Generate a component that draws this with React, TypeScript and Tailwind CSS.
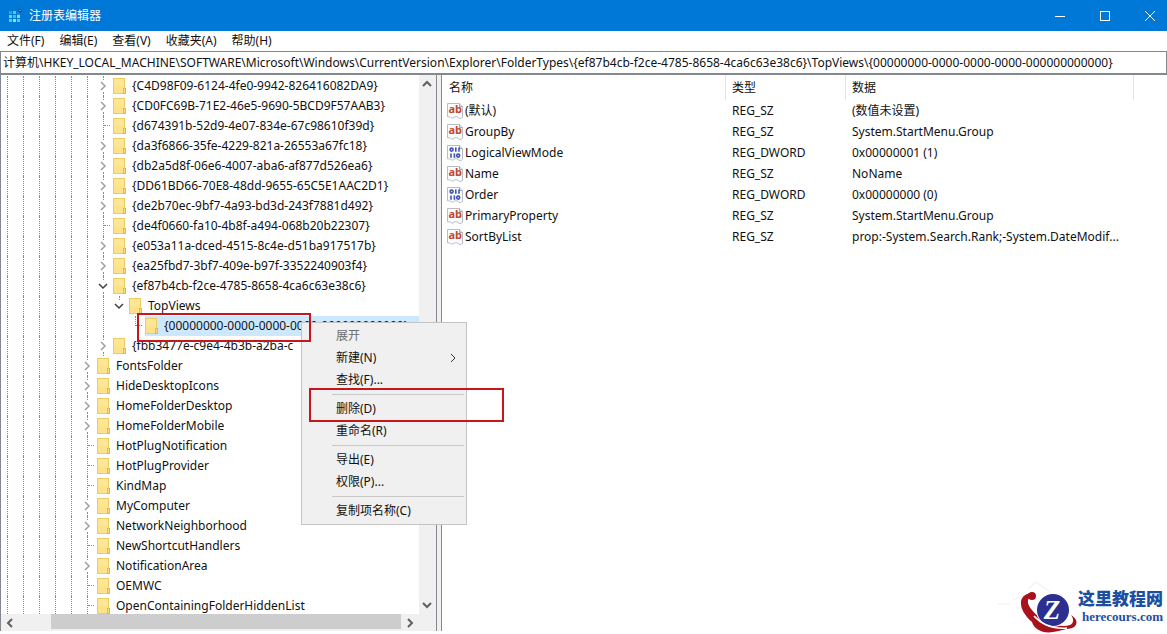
import type { ReactNode } from "react"

type TreeState = "closed" | "open" | "leaf"

type TreeNode = {
    name: string
    depth: number
    state: TreeState
    selected?: boolean
}

type RegValue = {
    name: string
    type: "REG_SZ" | "REG_DWORD"
    data: string
}

const ADDRESS =
    "计算机\\HKEY_LOCAL_MACHINE\\SOFTWARE\\Microsoft\\Windows\\CurrentVersion\\Explorer\\FolderTypes\\{ef87b4cb-f2ce-4785-8658-4ca6c63e38c6}\\TopViews\\{00000000-0000-0000-0000-000000000000}"

const MENUS = ["文件(F)", "编辑(E)", "查看(V)", "收藏夹(A)", "帮助(H)"]

const NODES: TreeNode[] = [
    { name: "{C4D98F09-6124-4fe0-9942-826416082DA9}", depth: 6, state: "closed" },
    { name: "{CD0FC69B-71E2-46e5-9690-5BCD9F57AAB3}", depth: 6, state: "closed" },
    { name: "{d674391b-52d9-4e07-834e-67c98610f39d}", depth: 6, state: "leaf" },
    { name: "{da3f6866-35fe-4229-821a-26553a67fc18}", depth: 6, state: "closed" },
    { name: "{db2a5d8f-06e6-4007-aba6-af877d526ea6}", depth: 6, state: "closed" },
    { name: "{DD61BD66-70E8-48dd-9655-65C5E1AAC2D1}", depth: 6, state: "closed" },
    { name: "{de2b70ec-9bf7-4a93-bd3d-243f7881d492}", depth: 6, state: "closed" },
    { name: "{de4f0660-fa10-4b8f-a494-068b20b22307}", depth: 6, state: "leaf" },
    { name: "{e053a11a-dced-4515-8c4e-d51ba917517b}", depth: 6, state: "closed" },
    { name: "{ea25fbd7-3bf7-409e-b97f-3352240903f4}", depth: 6, state: "closed" },
    { name: "{ef87b4cb-f2ce-4785-8658-4ca6c63e38c6}", depth: 6, state: "open" },
    { name: "TopViews", depth: 7, state: "open" },
    { name: "{00000000-0000-0000-0000-000000000000}", depth: 8, state: "leaf", selected: true },
    { name: "{fbb3477e-c9e4-4b3b-a2ba-c", depth: 6, state: "closed" },
    { name: "FontsFolder", depth: 5, state: "closed" },
    { name: "HideDesktopIcons", depth: 5, state: "closed" },
    { name: "HomeFolderDesktop", depth: 5, state: "closed" },
    { name: "HomeFolderMobile", depth: 5, state: "closed" },
    { name: "HotPlugNotification", depth: 5, state: "leaf" },
    { name: "HotPlugProvider", depth: 5, state: "leaf" },
    { name: "KindMap", depth: 5, state: "leaf" },
    { name: "MyComputer", depth: 5, state: "closed" },
    { name: "NetworkNeighborhood", depth: 5, state: "closed" },
    { name: "NewShortcutHandlers", depth: 5, state: "leaf" },
    { name: "NotificationArea", depth: 5, state: "closed" },
    { name: "OEMWC", depth: 5, state: "leaf" },
    { name: "OpenContainingFolderHiddenList", depth: 5, state: "leaf" },
]

const VALUES: RegValue[] = [
    { name: "(默认)", type: "REG_SZ", data: "(数值未设置)" },
    { name: "GroupBy", type: "REG_SZ", data: "System.StartMenu.Group" },
    { name: "LogicalViewMode", type: "REG_DWORD", data: "0x00000001 (1)" },
    { name: "Name", type: "REG_SZ", data: "NoName" },
    { name: "Order", type: "REG_DWORD", data: "0x00000000 (0)" },
    { name: "PrimaryProperty", type: "REG_SZ", data: "System.StartMenu.Group" },
    { name: "SortByList", type: "REG_SZ", data: "prop:-System.Search.Rank;-System.DateModif..." },
]

const Chevron = ({ dir, className }: { dir: "up" | "down" | "left" | "right"; className: string }) => {
    const paths = {
        up: "M1 7 L5 3 L9 7",
        down: "M1 3 L5 7 L9 3",
        left: "M7 1 L3 5 L7 9",
        right: "M3 1 L7 5 L3 9",
    }
    return (
        <svg viewBox="0 0 10 10" className={className} fill="none" stroke="currentColor">
            <path d={paths[dir]} />
        </svg>
    )
}

const RegeditIcon = () => (
    <svg viewBox="0 0 14 14" className="size-3.5">
        <rect x="1" y="2" width="3" height="3" fill="#2f9fe0" />
        <rect x="5" y="2" width="3" height="3" fill="#4dd0ea" />
        <rect x="9" y="3" width="3" height="3" fill="#1e86cf" />
        <rect x="1" y="6" width="3" height="3" fill="#5fdcf0" />
        <rect x="5" y="6" width="3" height="3" fill="#3bbde6" />
        <rect x="9" y="6" width="3" height="3" fill="#6de6f5" />
        <rect x="1" y="10" width="3" height="3" fill="#4dd0ea" />
        <rect x="5" y="10" width="3" height="3" fill="#74ecf7" />
        <rect x="9" y="10" width="3" height="3" fill="#4dd0ea" />
        <path d="M12 0 L14 2 L12 4 L10 2 Z" fill="#123f7a" />
        <path d="M11 1 L12 2 L13 1" stroke="#6de6f5" strokeWidth="0.6" fill="none" />
    </svg>
)

const FolderIcon = () => (
    <svg viewBox="0 0 13 16" className="h-4 w-[13px] shrink-0">
        <rect x="0.5" y="0.5" width="11" height="15" fill="#fde794" stroke="#eccb62" />
        <path d="M1 8 H11 V15 H1 Z" fill="#fbe084" opacity="0.6" />
        <rect x="10.5" y="10.5" width="2" height="5" fill="#fbe488" stroke="#e3b93c" />
    </svg>
)

const ValueIcon = ({ type }: { type: RegValue["type"] }) => (
    <svg viewBox="0 0 16 16" className="size-4 shrink-0">
        <path
            d="M0.5 0.5 H12.5 L15.5 3.5 V14.5 C14 16 12 15.5 11 14.5 C9.5 13 8 13.5 7 14.5 C5.5 15.8 4 14.8 3.5 14 L0.5 13.8 Z"
            fill="#fbfbfc"
            stroke="#b9bcc4"
        />
        <path d="M12.5 0.5 V3.5 H15.5" fill="#e4e5ea" stroke="#a3a7b0" />
        {type === "REG_SZ" ? (
            <text x="1.5" y="10" fill="#c0492b" className="font-['Noto_Sans',sans-serif] text-[11px] font-bold">
                ab
            </text>
        ) : (
            <g fill="none" stroke="#3c55b5" strokeWidth="1.6">
                <ellipse cx="4.6" cy="4.6" rx="1.5" ry="1.5" />
                <path d="M8.8 2.4 V6.8" />
                <path d="M12 2.4 V6.8" />
                <path d="M4 8.4 V12.8" />
                <path d="M7.4 8.4 V12.8" />
                <ellipse cx="11.2" cy="10.6" rx="1.5" ry="1.5" />
            </g>
        )}
    </svg>
)

// vertical dotted line of an ancestor level
const Guide = () => (
    <span className="h-5 w-4 shrink-0 pl-1.5">
        <span className="block h-5 border-l border-dotted border-[#8a8a8a]" />
    </span>
)

const Connector = ({ state, last }: { state: TreeState; last: boolean }) => {
    if (state === "leaf") {
        return (
            <span className="h-5 w-4 shrink-0 pl-1.5">
                <span className={last ? "block h-2.5 border-l border-dotted border-[#8a8a8a]" : "block h-5 border-l border-dotted border-[#8a8a8a]"}>
                    <span className="block h-2.5 w-1.5 border-b border-dotted border-[#8a8a8a]" />
                </span>
            </span>
        )
    }
    return (
        <button aria-label={state === "open" ? "折叠" : "展开"} className="flex h-5 w-4 shrink-0 flex-col items-start pl-px">
            <span className="h-1 w-1.5 border-r border-dotted border-[#8a8a8a]" />
            <span className="flex h-3 items-center">
                {state === "open" ? (
                    <Chevron dir="down" className="size-2.5 stroke-[1.5] text-[#404040]" />
                ) : (
                    <Chevron dir="right" className="size-2.5 stroke-[1.5] text-[#a0a0a0]" />
                )}
            </span>
            {!last && <span className="h-1 w-1.5 border-r border-dotted border-[#8a8a8a]" />}
        </button>
    )
}

const TreeRow = ({ node }: { node: TreeNode }) => {
    // depth 7 and 8 are the last children of their parents
    const guides = Array.from({ length: Math.min(node.depth, 7) })
    return (
        <li className="flex h-5 items-center">
            {guides.map((_, i) => (
                <Guide key={i} />
            ))}
            {node.depth > 7 && <span className="h-5 w-4 shrink-0" />}
            <Connector state={node.state} last={node.depth > 6} />
            <span
                className={
                    node.selected
                        ? "flex h-5 flex-1 items-center gap-1.5 bg-[#cce8ff] whitespace-nowrap"
                        : "flex h-5 flex-1 items-center gap-1.5 whitespace-nowrap"
                }
            >
                <FolderIcon />
                <span>{node.name}</span>
            </span>
        </li>
    )
}

const MenuItem = ({ children, disabled, sub }: { children: ReactNode; disabled?: boolean; sub?: boolean }) => (
    <button
        role="menuitem"
        disabled={disabled}
        className="flex h-[22px] w-full items-center justify-between pr-2 pl-[34px] text-xs disabled:text-[#6d6d6d]"
    >
        {children}
        {sub && <Chevron dir="right" className="size-2.5 text-[#303030]" />}
    </button>
)

const MenuSeparator = () => (
    <div role="separator" className="flex h-[7px] items-center pr-0.5 pl-[30px]">
        <div className="h-px flex-1 bg-[#c9c9c9]" />
    </div>
)

const ContextMenu = () => (
    <div role="menu" className="absolute top-[322px] left-[301px] w-[166px] border border-[#c4c4c4] bg-[#f0f0f0] py-0.5">
        <MenuItem disabled>展开</MenuItem>
        <MenuItem sub>新建(N)</MenuItem>
        <MenuItem>查找(F)...</MenuItem>
        <MenuSeparator />
        <MenuItem>删除(D)</MenuItem>
        <MenuItem>重命名(R)</MenuItem>
        <MenuSeparator />
        <MenuItem>导出(E)</MenuItem>
        <MenuItem>权限(P)...</MenuItem>
        <MenuSeparator />
        <MenuItem>复制项名称(C)</MenuItem>
    </div>
)

const SiteBadge = () => (
    <a href="#" className="absolute right-1 bottom-0 flex items-center">
        <svg viewBox="0 0 86 54" className="h-[54px] w-[86px]">
            <path d="M36 9 L44 2 L58 12 M6 24 H18 M22 20 L32 15 M24 28 H32" stroke="#f4f4f4" strokeWidth="1.5" fill="none" />
            <path
                d="M40 13 C35 13 30 16 29 21 C28 28 33 36 40 42 C42 49 51 54 61 52 C67 51 71 50 74 49 C82 49 86 45 84 40 C83 38 81 36 79 35 C82 39 82 43 78 45 C70 48 56 44 47 37 C40 31 35 25 36 20 Z"
                fill="#a8121c"
            />
            <circle cx="40" cy="16" r="4" fill="#a8121c" />
            <circle cx="61" cy="30" r="17" fill="#fff" />
            <circle cx="61" cy="30" r="16" fill="#2a2f90" />
            <path d="M42 36 C50 45 62 49 75 48" stroke="#fff" strokeWidth="1.5" fill="none" />
            <text x="60" y="39" textAnchor="middle" fill="#fff" className="font-['Liberation_Serif',serif] text-[27px] font-bold italic">
                Z
            </text>
        </svg>
        <span className="flex flex-col items-end text-[#1c4f9f]">
            <span className="text-[17px] leading-5 font-black">这里教程网</span>
            <span className="font-['Liberation_Serif',serif] text-[13px] leading-4 font-bold">herecours.com</span>
        </span>
    </a>
)

const App = () => {
    return (
        <div className="relative flex h-screen flex-col overflow-hidden bg-white pb-[3px] font-['Noto_Sans','Noto_Sans_CJK_SC',sans-serif] text-xs text-[#111111]">
            <header className="flex h-[31px] shrink-0 items-center bg-[#0078d7] pl-2 text-white">
                <RegeditIcon />
                <h1 className="flex-1 pl-[7px]">注册表编辑器</h1>
                <button aria-label="最小化" className="flex h-full w-[45px] items-center justify-center pl-2.5">
                    <svg viewBox="0 0 10 10" className="size-2.5" stroke="currentColor">
                        <path d="M0 5.5 H10" />
                    </svg>
                </button>
                <button aria-label="最大化" className="flex h-full w-[45px] items-center justify-center pl-2.5">
                    <svg viewBox="0 0 10 10" className="size-2.5" fill="none" stroke="currentColor">
                        <rect x="0.5" y="0.5" width="9" height="9" />
                    </svg>
                </button>
                <button aria-label="关闭" className="flex h-full w-[45px] items-center justify-center pl-2.5">
                    <svg viewBox="0 0 10 10" className="size-2.5" stroke="currentColor">
                        <path d="M0 0 L10 10 M10 0 L0 10" />
                    </svg>
                </button>
            </header>

            <nav className="flex h-5 shrink-0 items-center gap-[15px] pl-[7px]">
                {MENUS.map((menu) => (
                    <button key={menu}>{menu}</button>
                ))}
            </nav>

            <input
                aria-label="地址"
                readOnly
                value={ADDRESS}
                className="h-6 w-full shrink-0 border border-b-2 border-[#828790] pb-0.5 pl-0.5 text-ellipsis outline-none"
            />

            <main className="flex min-h-0 flex-1">
                <section className="flex w-[437px] shrink-0 flex-col border-x border-[#828790]">
                    <div className="flex min-h-0 flex-1">
                        <ul className="flex-1 overflow-hidden pt-px">
                            {NODES.map((node) => (
                                <TreeRow key={node.name} node={node} />
                            ))}
                        </ul>
                        <div className="flex w-[17px] flex-col items-center justify-between bg-[#f0f0f0] py-1 pr-0.5">
                            <button aria-label="向上滚动">
                                <Chevron dir="up" className="size-2.5 stroke-2 text-[#606060]" />
                            </button>
                            <button aria-label="向下滚动">
                                <Chevron dir="down" className="size-2.5 stroke-2 text-[#606060]" />
                            </button>
                        </div>
                    </div>
                    <div className="flex h-[17px] shrink-0 items-center bg-[#f0f0f0] pr-[18px]">
                        <button aria-label="向左滚动" className="flex w-[17px] justify-center">
                            <Chevron dir="left" className="size-2.5 stroke-2 text-[#606060]" />
                        </button>
                        <div className="flex h-full flex-1 pb-0.5 pl-[33px]">
                            <div className="flex-1 bg-[#cdcdcd]" />
                        </div>
                        <button aria-label="向右滚动" className="flex w-[17px] justify-center">
                            <Chevron dir="right" className="size-2.5 stroke-2 text-[#606060]" />
                        </button>
                    </div>
                </section>
                <div className="w-1 shrink-0 bg-[#f0f0f0]" />
                <section className="min-w-0 flex-1 border-l border-[#828790]">
                    <table className="w-full table-fixed border-separate border-spacing-0 text-left whitespace-nowrap">
                        <colgroup>
                            <col className="w-[284px]" />
                            <col className="w-[120px]" />
                            <col className="w-[288px]" />
                            <col />
                        </colgroup>
                        <thead>
                            <tr className="h-[25px]">
                                <th className="border-r border-[#e5e5e5] pl-[7px] font-normal">名称</th>
                                <th className="border-r border-[#e5e5e5] pl-1.5 font-normal">类型</th>
                                <th className="border-r border-[#e5e5e5] pl-1.5 font-normal">数据</th>
                                <th />
                            </tr>
                        </thead>
                        <tbody>
                            {VALUES.map((value) => (
                                <tr key={value.name} className="h-[21px]">
                                    <td className="pl-[5px]">
                                        <span className="flex items-center gap-0.5">
                                            <ValueIcon type={value.type} />
                                            {value.name}
                                        </span>
                                    </td>
                                    <td className="pl-1.5">{value.type}</td>
                                    <td className="pl-1.5">{value.data}</td>
                                    <td />
                                </tr>
                            ))}
                        </tbody>
                    </table>
                </section>
            </main>

            <ContextMenu />
            <div className="pointer-events-none absolute top-[313px] left-[137px] h-[29px] w-[174px] border-2 border-[#c8161d]" />
            <div className="pointer-events-none absolute top-[388px] left-[309px] h-[34px] w-[195px] border-2 border-[#c8161d]" />
            <SiteBadge />
        </div>
    )
}
export default App
